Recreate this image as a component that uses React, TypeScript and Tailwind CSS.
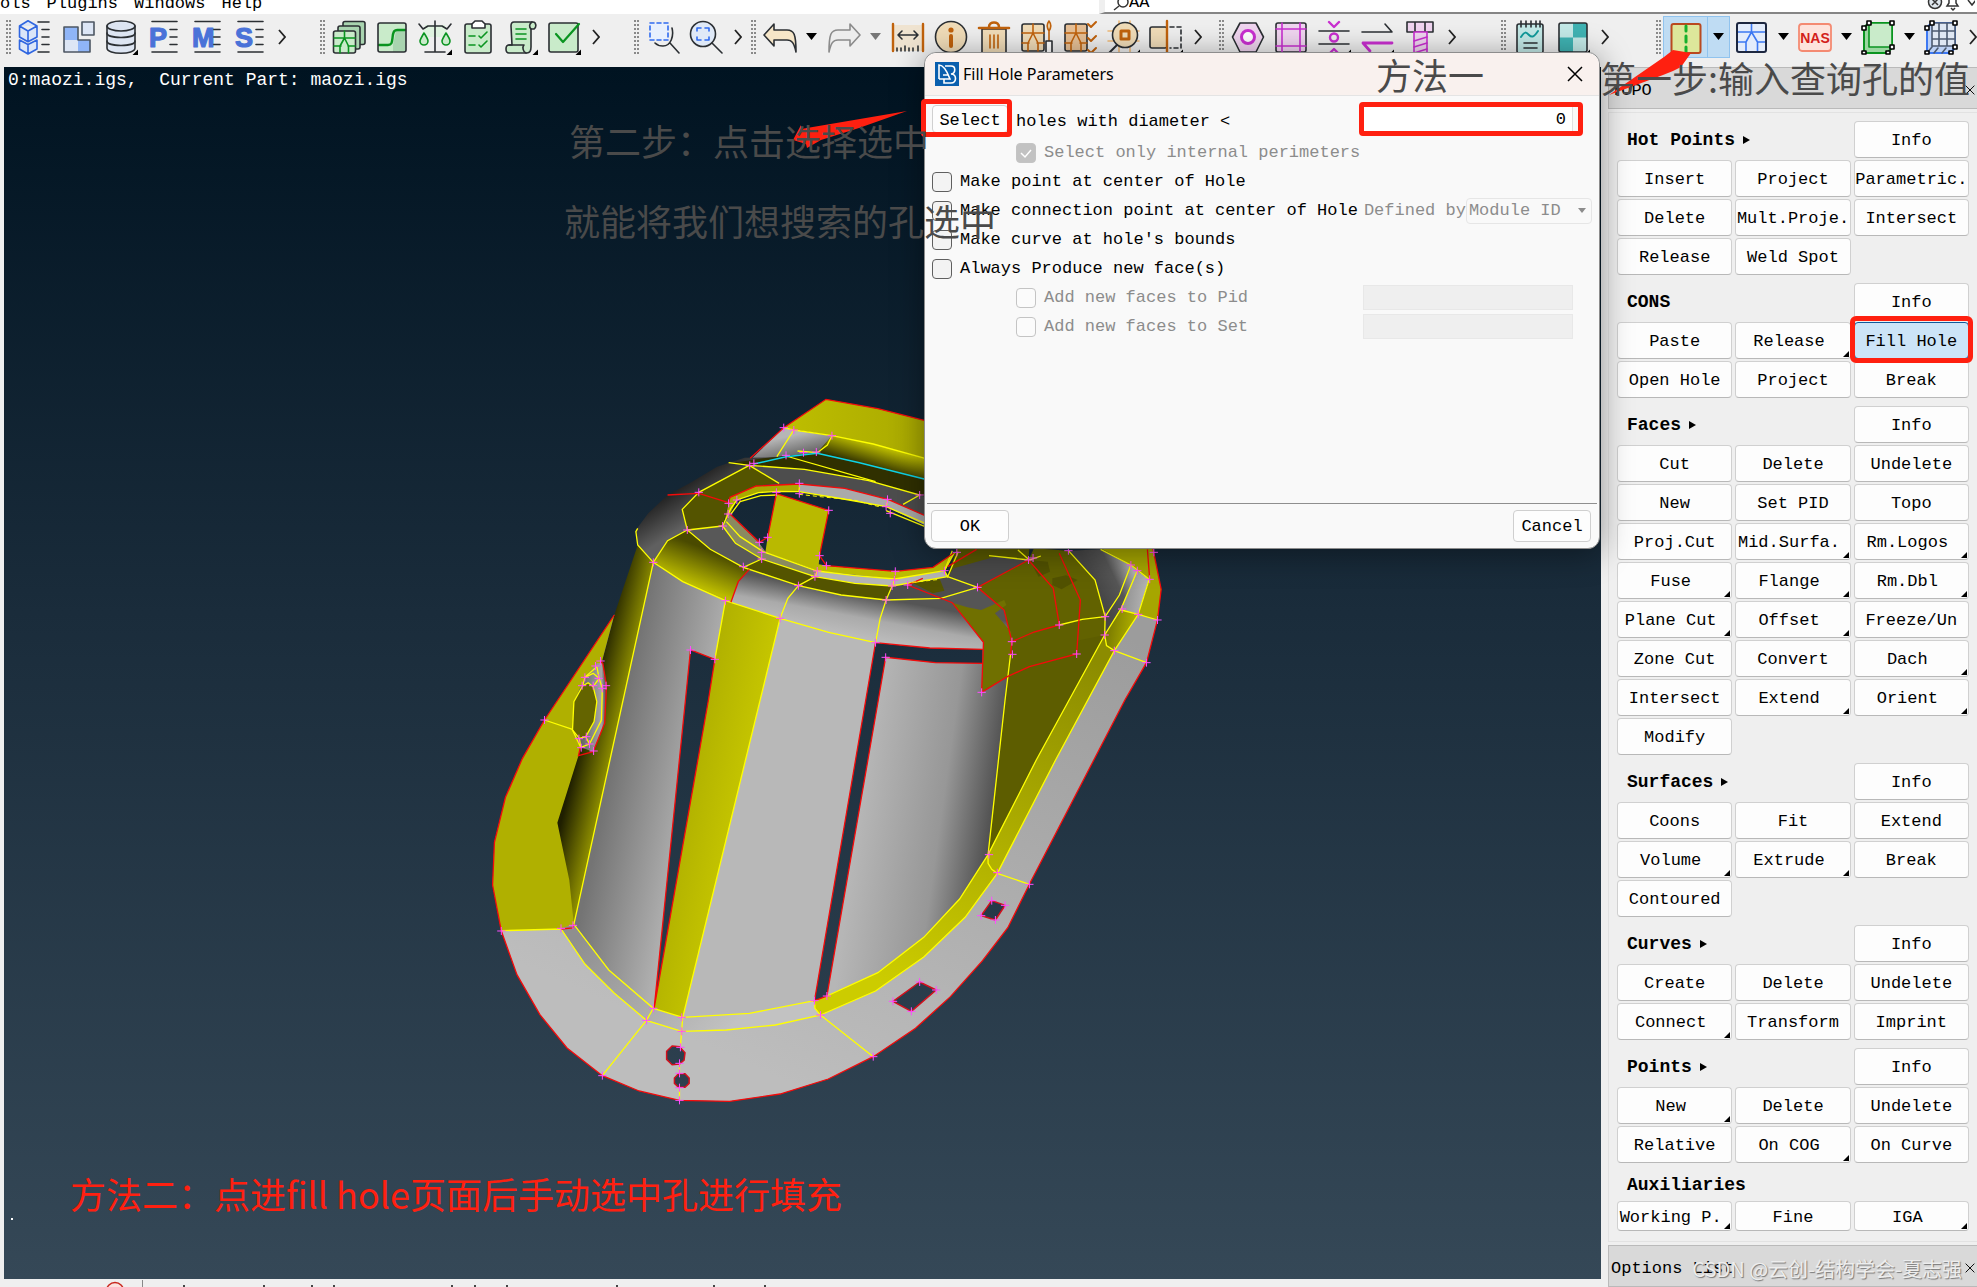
import { useState } from 'react'
import type { ReactNode } from 'react'

const INK = '#2b2f33'

function Icon({ children }: { children: ReactNode }) {
  return (
    <svg className="w-[34px] h-9 shrink-0" viewBox="0 0 34 36" fill="none" strokeWidth={1.6} strokeLinejoin="round" strokeLinecap="round">
      {children}
    </svg>
  )
}

const Corner = () => <path d="M34 30.500V36h-5.500z" fill="#000" />

function LetterList({ letter }: { letter: string }) {
  return (
    <Icon>
      <path d="M5 2.500h25M23 10.500h7M23 18h7M23 25.500h7M5 33h25" stroke={INK} />
      <text x="2" y="28" fill="#4a72d8" stroke="#4a72d8" strokeWidth={1.200} className="font-['Liberation_Sans',sans-serif] text-[27px] font-bold">{letter}</text>
    </Icon>
  )
}

const icons: Record<string, ReactNode> = {
  tree: (
    <Icon>
      <path d="M20 3h11M24 10.500h7M24 18h7M24 25.500h7M20 33h11" stroke={INK} />
      <path d="M1.500 7L10 1.800 19 7v11l-9 4.800L1.500 18zM1.500 7L10 12l9-5M10 12v10.500" fill="#dbe6f8" stroke="#2f66e0" />
      <path d="M1.500 21v9l8.500 5 9-5v-9l-9 4.500zM10 25.500V35" fill="#dbe6f8" stroke="#2f66e0" />
    </Icon>
  ),
  parts: (
    <Icon>
      <path d="M3 8h14v13H3z" fill="#8fb5f8" />
      <path d="M3 21h14v12H3z" fill="#dde6f5" />
      <path d="M17 21h12v12H17z" fill="#8fb5f8" />
      <path d="M3 8h14v13h12v12H3z" stroke="#4d5763" />
      <path d="M21 3h12v13H21z" fill="#dde6f5" stroke="#4d5763" />
    </Icon>
  ),
  database: (
    <Icon>
      <path d="M3 7v22c0 7 28 7 28 0V7" fill="#dde5f2" stroke={INK} />
      <ellipse cx="17" cy="7" rx="14" ry="5" fill="#dde5f2" stroke={INK} />
      <path d="M3 14c0 6 28 6 28 0M3 22c0 6 28 6 28 0" stroke={INK} />
      <Corner />
    </Icon>
  ),
  p: <LetterList letter="P" />,
  m: <LetterList letter="M" />,
  s: <LetterList letter="S" />,
  stack: (
    <Icon>
      <rect x="11" y="2.500" width="22" height="23" rx="2" fill="#a9d4b0" stroke={INK} />
      <rect x="6" y="7" width="22" height="23" rx="2" fill="#a9d4b0" stroke={INK} />
      <rect x="1.500" y="12" width="22" height="22" rx="2" fill="#c9ebca" stroke={INK} />
      <path d="M2 19h21M2 27h7M16 27h7M12.500 12v7L8 27v7M12.500 19l4 8v7" stroke="#0a9420" />
    </Icon>
  ),
  step: (
    <Icon>
      <rect x="3" y="4" width="28" height="29" rx="2" fill="#c9ebca" />
      <path d="M18 26l3-14h10v21H18z" fill="#a9d4b0" />
      <path d="M4 26h9c4 0 4-3 4.500-7s.5-8 5-8H30" stroke="#0a9420" strokeWidth={2.400} />
      <rect x="3" y="4" width="28" height="29" rx="2" stroke={INK} />
    </Icon>
  ),
  balance: (
    <Icon>
      <path d="M7 6h20l4 12H3z" fill="#dff3df" />
      <path d="M17 2v31M7 33h20M1 5l4 5 5-3h14l5 3 4-5" stroke={INK} />
      <path d="M6 14c-3 5-4 7-4 8a4 4 0 0 0 8 0c0-2-2-5-4-8zM28 14c-3 5-4 7-4 8a4 4 0 0 0 8 0c0-2-2-5-4-8z" fill="#c9ebca" stroke="#0a9420" />
      <Corner />
    </Icon>
  ),
  checklist: (
    <Icon>
      <rect x="4" y="5" width="26" height="29" rx="2" fill="#c9ebca" stroke={INK} />
      <path d="M11 9V5l3-3h7l3 3v4z" fill="#fff" stroke={INK} />
      <path d="M8 17h6M8 26h6M18 17l2 2 6-6M18 26l2 2 6-6" stroke="#0a9420" />
    </Icon>
  ),
  scroll: (
    <Icon>
      <path d="M7 7c0-3 1-4 3-4h19c3 0 4 5 1 7h-3v18c0 4-1 6-4 6H5c-4 0-4-8 0-8h3z" fill="#c9ebca" stroke={INK} />
      <path d="M5 26h15c-2 2-1 7 2 8M27 10c-2-2-2-5 1-7" stroke={INK} />
      <path d="M12 10h10M12 15h10M12 20h10" stroke="#0a9420" />
      <Corner />
    </Icon>
  ),
  check: (
    <Icon>
      <rect x="2" y="4" width="29" height="29" rx="2" fill="#c9ebca" stroke={INK} />
      <path d="M9 15l7 8L32 5" stroke="#0a9420" strokeWidth={2.200} />
      <Corner />
    </Icon>
  ),
  marquee: (
    <Icon>
      <path d="M26 9c2 8-1 18-9 18-3 0-6-1-8-3M24 24l9 10" stroke={INK} />
      <path d="M4 4h18v17H4z" fill="#e8f0fd" stroke="#2f6bf0" strokeDasharray="4 3" />
    </Icon>
  ),
  zoomFit: (
    <Icon>
      <circle cx="14" cy="15" r="12.500" fill="#dfe9f7" stroke={INK} />
      <path d="M23 24l10 10" stroke={INK} />
      <path d="M8 12V9h4M16 9h4v3M20 18v3h-4M12 21H8v-3" stroke="#2f6bf0" />
    </Icon>
  ),
  undo: (
    <Icon>
      <path d="M11 5v6h13c7 0 9 4 9 22-2-9-4-12-9-12H11v6L1 16z" fill="#f6e6c8" stroke={INK} />
    </Icon>
  ),
  redo: (
    <Icon>
      <path d="M23 5v6H11c-7 0-9 4-9 22 2-9 4-12 9-12h12v6l10-11z" fill="#ededed" stroke="#8b8b8b" />
    </Icon>
  ),
  measure: (
    <Icon>
      <path d="M2 6h30v26H2z" fill="#efe3d0" />
      <path d="M2 5v27M32 5v27" stroke="#c0620c" strokeWidth={2.400} />
      <path d="M7 16h20M11 12l-4 4 4 4M23 12l4 4-4 4M6 32v-3M10 32v-3M14 32v-5M18 32v-3M22 32v-3M27 32v-5" stroke={INK} />
    </Icon>
  ),
  info: (
    <Icon>
      <circle cx="17" cy="18" r="15.500" fill="#f0dcb8" stroke={INK} />
      <circle cx="17" cy="11" r="2.600" fill="#c0620c" />
      <path d="M17 17v10" stroke="#c0620c" strokeWidth={4} />
    </Icon>
  ),
  trash: (
    <Icon>
      <path d="M5 10h24v24H5z" fill="#f0dcb8" stroke={INK} />
      <path d="M2 9h30M12 8c0-6 10-6 10 0" stroke="#c0620c" strokeWidth={2.600} />
      <path d="M13 16v13M17 16v13M21 16v13" stroke="#c0620c" />
    </Icon>
  ),
  meshTool: (
    <Icon>
      <rect x="2" y="5" width="22" height="27" rx="2" fill="#f0dcb8" stroke={INK} />
      <path d="M2 14h22M2 24h7M17 24h7M13 5v9l-5 10v8M13 14l5 10v8" stroke="#c0620c" />
      <path d="M29 2c-3 4-2 7 0 10 2-3 3-6 0-10zM29 12v10" stroke="#c0620c" fill="#f0dcb8" />
      <rect x="26" y="22" width="6" height="12" fill="#fff" stroke={INK} />
    </Icon>
  ),
  meshCheck: (
    <Icon>
      <rect x="2" y="5" width="22" height="27" rx="2" fill="#e7c096" stroke={INK} />
      <path d="M2 14h22M2 24h7M17 24h7M13 5v9l-5 10v8M13 14l5 10v8" stroke="#c0620c" />
      <path d="M25 5l3 3 5-5M25 19l3 3 5-5M25 31l3 3 5-5" stroke="#c0620c" strokeWidth={2} />
    </Icon>
  ),
  inspect: (
    <Icon>
      <path d="M2 12h31M2 22h31M13 2v32M24 2v32" stroke="#f0bb78" />
      <circle cx="19" cy="16" r="12.500" fill="#f0dcb8" stroke={INK} />
      <path d="M11 26L2 35" stroke={INK} strokeWidth={2} />
      <path d="M15 12h8v8h-8z" stroke="#c0620c" strokeWidth={3} />
      <Corner />
    </Icon>
  ),
  mirror: (
    <Icon>
      <rect x="1" y="8" width="17" height="21" rx="2" fill="#f0dcb8" stroke={INK} />
      <path d="M21 8h11v21H21" stroke={INK} strokeDasharray="4 3" />
      <path d="M18 2v32" stroke="#c0620c" strokeWidth={2.400} />
      <Corner />
    </Icon>
  ),
  nut: (
    <Icon>
      <path d="M1.500 18L9 4h16l7.500 14L25 33H9z" fill="#f0d5f0" stroke={INK} />
      <circle cx="17" cy="18" r="6.500" fill="#fff" stroke="#c92fd0" strokeWidth={3} />
    </Icon>
  ),
  frame: (
    <Icon>
      <rect x="2" y="4" width="30" height="29" rx="2" fill="#f0d5f0" stroke={INK} />
      <path d="M2 10h30M2 27h30M8 4v29M26 4v29" stroke="#c92fd0" />
    </Icon>
  ),
  pinch: (
    <Icon>
      <path d="M2 12h30M2 25h30" stroke={INK} />
      <circle cx="17" cy="18.500" r="4" stroke="#c92fd0" strokeWidth={2.400} />
      <path d="M12 3l5 5 5-5M12 35l5-5 5 5" stroke="#c92fd0" strokeWidth={2.400} />
      <Corner />
    </Icon>
  ),
  swap: (
    <Icon>
      <path d="M2 13h30l-7-8" stroke={INK} />
      <path d="M32 24H3l7 8" stroke="#c92fd0" strokeWidth={2.800} />
      <Corner />
    </Icon>
  ),
  bolt: (
    <Icon>
      <path d="M4 3h26v10H4zM12 3v10M22 3v10" fill="#f0d5f0" stroke={INK} />
      <path d="M11 13h13v21H11z" fill="#f0d5f0" stroke="#c92fd0" />
      <path d="M11 22l13-4M11 28l13-4M11 34l13-4" stroke="#c92fd0" />
    </Icon>
  ),
  notepad: (
    <Icon>
      <rect x="4" y="5" width="26" height="29" rx="2" fill="#c3e9e7" stroke={INK} />
      <path d="M8 2v6M13 2v6M18 2v6M23 2v6M27 2v6M11 24h13M11 29h13" stroke={INK} />
      <path d="M8 18c4-6 5-5 8-2s5 2 9-4" stroke="#109a9a" strokeWidth={2} />
    </Icon>
  ),
  checker: (
    <Icon>
      <rect x="3" y="4" width="28" height="29" rx="2" fill="#c3e9e7" />
      <path d="M17 4h14v14.500H17zM17 18.500H3V33h14z" fill="#3fb3b3" />
      <rect x="3" y="4" width="28" height="29" rx="2" stroke={INK} />
      <Corner />
    </Icon>
  ),
  topo: (
    <Icon>
      <rect x="2.500" y="5" width="29" height="29" rx="2" fill="#dde79b" stroke="#b9491f" strokeWidth={2} />
      <path d="M17 7v5M17 17v6M17 28v5" stroke="#17b02c" strokeWidth={3} />
    </Icon>
  ),
  mesh: (
    <Icon>
      <rect x="2" y="4" width="29" height="29" rx="2" fill="#e3ecfb" />
      <path d="M2 13h29M2 23h8M23 23h8M16.500 4v9L11 23v10M16.500 13l6 10v10" stroke="#3d78f2" />
      <rect x="2" y="4" width="29" height="29" rx="2" stroke="#1d2740" strokeWidth={2} />
    </Icon>
  ),
  nas: (
    <Icon>
      <rect x="1" y="5" width="32" height="27" rx="3" fill="#fde3dc" stroke="#f48a72" strokeWidth={1.800} />
      <text x="17" y="24" textAnchor="middle" fill="#d3201a" className="font-['Liberation_Sans',sans-serif] text-[14px] font-bold">NAS</text>
    </Icon>
  ),
  solid: (
    <Icon>
      <path d="M3 8l5-4h23v25l-5 5H3z" fill="#9ad7a0" stroke="#0a9420" strokeWidth={2} />
      <path d="M8 4h23v24H8z" fill="#c9ebca" stroke="#0a9420" />
      <path d="M6 2h4v4H6zM29 2h4v4h-4zM1 7h4v4H1zM29 26h4v4h-4zM1 32h4v3H1zM25 32h4v3h-4z" fill="#fff" stroke="#000" />
    </Icon>
  ),
  solidMesh: (
    <Icon>
      <path d="M3 8l5-4h23v25l-5 5H3z" fill="#bcd1f5" stroke="#3d78f2" strokeWidth={2} />
      <path d="M8 4h23v23H8zM15 4v23M23 4v23M8 12h23M8 20h23M3 34l5-6M10 34l4-5M18 34l4-5" fill="#dfe7f3" stroke="#4c5a70" />
      <path d="M6 2h4v4H6zM29 2h4v4h-4zM1 7h4v4H1zM29 26h4v4h-4zM1 32h4v3H1zM25 32h4v3h-4z" fill="#fff" stroke="#000" />
    </Icon>
  ),
}

function Tool({ name }: { name: string }) {
  return (
    <button type="button" aria-label={name} className="w-[43px] h-10 flex items-center justify-center shrink-0">
      {icons[name]}
    </button>
  )
}

function More() {
  return (
    <button type="button" aria-label="more tools" className="w-[22px] h-10 flex items-center justify-center shrink-0">
      <svg className="w-2 h-4" viewBox="0 0 8 16" fill="none" stroke="#222" strokeWidth={1.800}>
        <path d="M1 1l6 7-6 7" />
      </svg>
    </button>
  )
}

function Drop({ muted }: { muted?: boolean }) {
  return (
    <button type="button" aria-label="options" className="w-[21px] h-10 flex items-center justify-center shrink-0">
      <svg className="w-[11px] h-[7px]" viewBox="0 0 11 7">
        <path d="M0 0h11L5.500 7z" fill={muted ? '#777' : '#000'} />
      </svg>
    </button>
  )
}

const Handle = () => <span className="w-[5px] h-[34px] mx-0.5 shrink-0 border-x-2 border-dotted border-[#8a8a8a]" />

const Group = ({ children, className = '' }: { children: ReactNode; className?: string }) => (
  <div className={`flex items-center shrink-0 ${className}`}>
    <Handle />
    {children}
  </div>
)

function MenuBar() {
  return (
    <header className="h-[14px] overflow-hidden flex items-end bg-white text-[17px] leading-5">
      <nav className="flex flex-1 items-end gap-4 whitespace-nowrap">
        <a href="#tools">ols</a>
        <a href="#plugins">Plugins</a>
        <a href="#windows">Windows</a>
        <a href="#help">Help</a>
      </nav>
      <div className="w-[878px] flex items-end border-l-[6px] border-l-[#efefef] border-b-2 border-b-[#858585]">
        <svg className="w-4 h-3 ml-2 shrink-0" viewBox="0 0 16 12" fill="none" stroke="#333" strokeWidth={1.500}>
          <circle cx="10" cy="2" r="5" />
          <path d="M6 6L1 10" />
        </svg>
        <input aria-label="search" defaultValue="AA" className="flex-1 h-[18px] outline-none" />
        <svg className="w-12 h-3 mr-0.5 shrink-0" viewBox="0 0 48 12" fill="none" stroke="#333" strokeWidth={1.500}>
          <circle cx="8" cy="2" r="6.500" fill="#dfe7ee" />
          <path d="M5-1l6 6M11-1L5 5M20 6h11l-2-3V-3h-7v6zM24 8l2 2 2-2M41 0l4 5 4-5" />
        </svg>
      </div>
    </header>
  )
}

function Toolbar() {
  return (
    <div className="h-[53px] pb-2 pl-1 flex items-center bg-[#efefef] overflow-hidden">
      <Group>
        {['tree', 'parts', 'database', 'p', 'm', 's'].map((n) => <Tool key={n} name={n} />)}
        <More />
      </Group>
      <Group className="ml-[25px]">
        {['stack', 'step', 'balance', 'checklist', 'scroll', 'check'].map((n) => <Tool key={n} name={n} />)}
        <More />
      </Group>
      <Group className="ml-[25px]">
        <Tool name="marquee" />
        <Tool name="zoomFit" />
        <More />
      </Group>
      <Group>
        <Tool name="undo" />
        <Drop />
        <Tool name="redo" />
        <Drop muted />
        {['measure', 'info', 'trash', 'meshTool', 'meshCheck', 'inspect', 'mirror'].map((n) => <Tool key={n} name={n} />)}
        <More />
      </Group>
      <Group className="ml-2">
        {['nut', 'frame', 'pinch', 'swap', 'bolt'].map((n) => <Tool key={n} name={n} />)}
        <More />
      </Group>
      <Group className="ml-9">
        <Tool name="notepad" />
        <Tool name="checker" />
        <More />
      </Group>
      <Group className="ml-[38px]">
        <div className="flex bg-[#bfdcf3] border border-[#90c3ee]">
          <Tool name="topo" />
          <div className="border-l border-[#90c3ee]"><Drop /></div>
        </div>
        {['mesh', 'nas', 'solid'].map((n) => (
          <div key={n} className="flex w-[63px]">
            <Tool name={n} />
            <Drop />
          </div>
        ))}
        <Tool name="solidMesh" />
        <More />
      </Group>
    </div>
  )
}

const yellowLines = [
  '184,1020 245,1048', '421,547 248,1633', '578,662 555,838', '697,715 485,1913',
  '387,445 383,455 387,495 421,547 485,605 578,662 697,715 803,757 905,788',
  '421,547 452,482 495,450', '630,256 520,337 484,388 495,450 545,508 617,562 737,617 830,645 928,660 1047,655 1127,622',
  '495,450 572,438', '617,562 657,537', '737,617 773,590', '928,660 941,618', '1062,590 1127,622',
  '737,617 714,655 697,715', '928,660 915,715 905,788',
  '572,438 600,490 657,537 773,590 860,610 941,618 1062,590',
  '580,425 610,470 660,515 778,573 860,587 947,597 1055,572 1075,520',
  '572,438 590,385 603,360 650,338 690,334 738,335 835,357 928,380 1013,430',
  '590,402 610,365 655,347 690,345', '928,392 1013,440', '740,312 738,335', '932,358 928,380', '773,590 778,573', '941,618 947,597',
  '585,248 630,256 750,268 890,302 1001,345 965,373', '710,228 905,305', '630,256 695,310', '735,213 778,218',
  '705,143 727,150 810,167 900,192 1013,235', '727,150 690,230', '810,167 800,195 778,218',
  '1199,823 1187,960 1150,1424', '1305,735 1355,718 1405,710', '1325,512 1383,600 1405,710 1404,765',
  '1395,508 1461,555 1501,598', '1461,555 1436,645 1405,710', '1475,572 1440,685 1404,765 1255,1140 1150,1424',
  '1440,690 1477,703 1519,720', '1501,598 1477,703 1425,812 1297,1140 1170,1480', '1404,765 1408,797 1425,812 1495,848',
  '1150,1424 1150,1450 1158,1468 1170,1480 1240,1513',
  '1150,1424 1088,1557 1010,1672 910,1778 799,1848', '1170,1480 1100,1612 1010,1731 905,1833 785,1905 773,1885 772,1862',
  '90,1652 220,1647 272,1752 335,1838 406,1921 483,1954 580,1950 687,1935 785,1905 900,2030',
  '248,1633 324,1770 421,1885 485,1912 630,1900 772,1862',
  '421,1885 406,1921 310,2087', '485,1912 480,2000', '478,2050 478,2078', '478,2123 478,2160',
  '298,860 303,895 310,925 308,1020 282,1092 263,1102 245,1050', '267,918 272,892 290,880 303,895 290,920', '272,892 298,860', '260,1075 263,1102', '274,1070 282,1092',
  '1152,527 1240,540 1265,528', '1215,510 1240,540', '1072,512 1055,572 1062,590 1085,515',
]

const redLines = [
  '336,705 184,1020 136,1135 99,1252 75,1387 71,1515 90,1653 124,1784 174,1904 233,2004 310,2087 390,2133 478,2161 587,2164 697,2142 802,2097 900,2030 992,1945 1068,1850 1138,1742 1193,1643 1240,1513 1448,960 1495,848 1519,720 1527,628 1509,505',
  '632,235 705,143 797,58 910,86 1013,122', '452,345 520,340 585,368 588,352 645,318 740,312 838,325 932,358 1013,407',
  '588,402 652,487 670,472 689,341 803,391 783,527 798,557 948,574 1030,562 1075,520', '630,568 606,605 590,667',
  '555,838 502,810 491,960 423,1883 541,960 555,838',
  '1138,808 1023,804 905,788 772,1862 799,1848 911,960 927,832 1035,848 1138,850',
  '1008,595 975,615 1072,668 1140,787 1136,937 1192,890 1240,860 1343,822 1351,660 1305,520',
  '1125,508 1062,560', '1238,540 1127,622 1185,690 1202,785 1250,756 1305,735 1292,625 1238,540', '1202,785 1199,823',
  '1497,508 1502,598', '306,842 311,850 319,918 315,1030 290,1115 258,1127 262,1102', '220,1647 246,1644 248,1633',
]

const crosses = [
  [705, 143], [727, 150], [810, 167], [710, 226], [748, 218], [776, 216], [640, 250], [631, 256], [520, 337], [585, 370], [495, 450],
  [572, 438], [584, 402], [603, 360], [689, 337], [739, 310], [739, 341], [803, 391], [931, 358], [928, 380], [937, 400], [1001, 345],
  [652, 487], [670, 472], [657, 517], [657, 537], [617, 560], [737, 617], [773, 590], [783, 527], [798, 557], [778, 573], [948, 574],
  [946, 600], [941, 618], [928, 660], [975, 615], [1055, 572], [1082, 517], [1127, 622], [1238, 540], [1248, 534], [1325, 512],
  [421, 547], [578, 662], [697, 715], [905, 788], [927, 832], [502, 810], [555, 838], [1136, 937], [1202, 785], [1203, 823], [1305, 735],
  [1343, 822], [1405, 710], [1404, 765], [1425, 812], [1495, 848], [1519, 720], [1477, 703], [1442, 687], [1461, 555], [1475, 572],
  [1502, 598], [1511, 517], [184, 1020], [306, 843], [295, 858], [272, 892], [266, 917], [290, 917], [302, 895], [318, 917], [310, 925],
  [259, 1076], [275, 1070], [264, 1103], [282, 1092], [291, 1113], [90, 1653], [220, 1645], [246, 1636], [421, 1885], [406, 1921],
  [483, 1912], [483, 1954], [772, 1862], [799, 1848], [785, 1905], [900, 2030], [310, 2087], [478, 2161], [480, 2002], [478, 2050],
  [478, 2080], [478, 2123], [1152, 1424], [1170, 1478], [1240, 1513], [1158, 1562], [1187, 1576], [1166, 1620], [1135, 1607],
  [1001, 1806], [1037, 1830], [983, 1894], [943, 1864],
]

const cutouts = [
  '1158,1562 1187,1576 1166,1620 1135,1607',
  '1001,1806 1037,1830 983,1894 943,1864',
  '462,1998 478,2000 490,2018 488,2040 478,2052 462,2054 450,2038 450,2014',
  '476,2081 490,2081 499,2094 499,2110 490,2122 476,2122 467,2110 467,2094',
]

const buckle = '267,918 248,965 245,1050 260,1075 274,1070 292,1025 298,965 290,920 279,908'

const faces: [string, string][] = [
  // brim
  ['url(#brim)', '336,705 184,1020 136,1135 99,1252 75,1387 71,1515 90,1653 124,1784 174,1904 233,2004 310,2087 390,2133 478,2161 587,2164 697,2142 802,2097 900,2030 992,1945 1068,1850 1138,1742 1193,1643 1240,1513 1448,960 1495,848 1519,720 1460,640 1200,823 421,547'],
  ['#b0b000', '336,705 184,1020 136,1135 99,1252 75,1387 71,1515 90,1653 220,1647 247,1640 300,1300 310,840'],
  ['url(#side)', '383,450 387,495 336,705 310,840 295,940 258,1127 212,1328 238,1500 248,1633 421,547'],
  ['url(#trough)', '248,1633 324,1770 421,1885 485,1912 630,1900 772,1862 785,1905 687,1935 580,1950 483,1954 406,1921 335,1838 272,1752 220,1645'],
  // crown walls
  ['url(#wallL)', '421,547 485,605 578,662 423,1885 324,1770 248,1633'],
  ['url(#strip)', '578,662 697,715 485,1913 421,1885'],
  ['#b8b8b8', '697,715 803,757 905,788 772,1862 630,1900 485,1913'],
  ['url(#wallR)', '905,788 1138,808 1202,785 1195,880 1187,960 1150,1424 1088,1557 1010,1672 910,1778 799,1848 772,1862'],
  ['#5d5d00', '1199,823 1202,700 1405,700 1404,765 1255,1140 1150,1424 1187,960'],
  ['url(#fillet)', '1404,765 1408,797 1425,812 1297,1140 1170,1480 1100,1612 1010,1731 905,1833 785,1905 773,1885 772,1862 799,1848 910,1778 1010,1672 1088,1557 1150,1424 1255,1140'],
  // slots
  ['url(#sky)', '502,810 555,838 541,960 423,1883 491,960'],
  ['url(#sky)', '905,788 1023,804 1138,808 1138,850 1035,848 927,832 911,960 799,1848 772,1862'],
  // back brim
  ['url(#backY)', '705,143 797,58 910,86 1013,122 1013,235 900,192 810,167'],
  ['url(#backG)', '705,143 727,150 810,167 778,218 710,228 632,240'],
  ['url(#backShade)', '810,167 900,192 1013,235 1013,300 870,248 778,218'],
  ['url(#dome)', '383,450 410,400 452,345 500,310 560,260 620,233 700,232 630,256 520,337 484,388 495,450 452,482 421,547 387,495'],
  ['#303000', '588,250 660,235 710,228 778,220 870,248 1013,298 1013,350 890,302 750,268 630,256'],
  // crown band
  ['url(#bandY)', '421,547 452,482 495,450 545,508 617,562 630,568 606,605 590,667 485,605'],
  ['url(#bandG)', '630,568 737,617 830,645 928,660 1047,655 1127,622 1185,690 1202,785 1138,808 1023,804 905,788 803,757 697,715 590,667 606,605'],
  // flat ring
  ['#545400', '630,256 695,310 645,318 588,352 572,438 495,450 484,388 520,337'],
  ['#4d4d4d', '630,256 750,268 890,302 1013,350 1013,407 932,358 838,325 740,312 645,318 695,310'],
  ['#585858', '495,450 572,438 600,490 657,537 617,562 545,508'],
  ['#545400', '617,562 657,537 773,590 860,610 941,618 928,660 830,645 737,617'],
  ['#4d4d4d', '941,618 1062,590 1127,622 1047,655 928,660'],
  ['#545400', '985,608 1045,598 1055,632 1030,640'],
  ['#5a5a00', '1062,590 1082,505 1240,505 1238,540 1127,622'],
  ['#4a4a4a', '1062,590 1075,565 1165,530 1238,540 1127,622'],
  // inner ring wall
  ['#a9a900', '588,352 645,318 740,312 738,335 690,334 650,338 603,360 588,402 575,430'],
  ['#aaaaaa', '740,312 838,325 932,358 1013,407 1013,436 928,380 835,357 738,335'],
  ['#8a8a60', '588,402 652,487 665,515 778,573 773,590 657,537 600,490 572,438'],
  ['#bcbc00', '783,527 798,557 948,574 1030,562 1080,515 1055,575 947,597 778,573'],
  ['#b4b4b4', '778,573 947,597 1055,572 1062,590 941,618 860,610 773,590'],
  ['url(#sky)', '603,365 655,345 690,340 740,342 835,358 930,392 1013,438 1080,500 1075,520 1030,562 948,574 798,557 700,530 660,505 650,487 588,402'],
  ['#b9b900', '689,341 803,391 783,527 780,573 665,517 670,472'],
  // folded flap on the right
  ['#626200', '1127,622 1238,540 1250,505 1325,512 1383,600 1405,710 1404,765 1199,823 1202,785 1185,690'],
  ['#707000', '1072,668 1105,682 1135,690 1185,660 1190,675 1165,700 1200,755 1202,785 1199,823 1192,890 1136,937 1140,787'],
  ['#5f5f00', '1202,785 1305,735 1345,725 1343,822 1240,860 1192,890'],
  ['#525200', '1290,595 1320,586 1345,600 1310,628 1290,615'],
  ['#525200', '1240,540 1280,545 1285,575 1260,590'],
  ['url(#rim)', '1325,512 1395,508 1461,555 1475,572 1440,685 1404,765 1405,710 1383,600'],
  ['#a6a600', '1395,505 1509,505 1527,628 1519,720 1477,703 1502,598 1461,555'],
  ['url(#rimG)', '1475,572 1501,598 1477,703 1440,687'],
  ['url(#rimY)', '1404,765 1440,687 1477,703 1425,812 1408,797'],
  // side buckle
  ['url(#buckleG)', '298,850 311,850 319,918 315,1030 290,1115 263,1102 245,1050 248,965 272,892'],
  ['#646400', buckle],
  ...cutouts.map((points): [string, string] => ['url(#sky)', points]),
]

function Model() {
  return (
    <svg className="absolute inset-0 w-full h-full" viewBox="4 67 1597 1212" preserveAspectRatio="xMidYMid slice" fill="none">
      <defs>
        <linearGradient id="sky" gradientUnits="userSpaceOnUse" x1="0" y1="-939" x2="0" y2="2697">
          <stop stopColor="#001321" />
          <stop offset="0.450" stopColor="#1a2c3b" />
          <stop offset="1" stopColor="#354857" />
        </linearGradient>
        <linearGradient id="brim" gradientUnits="userSpaceOnUse" x1="1500" y1="800" x2="700" y2="2100">
          <stop stopColor="#9c9c9c" />
          <stop offset="1" stopColor="#bdbdbd" />
        </linearGradient>
        <linearGradient id="side" gradientUnits="userSpaceOnUse" x1="258" y1="1100" x2="330" y2="1112">
          <stop stopColor="#1f1f00" />
          <stop offset="1" stopColor="#8a8a00" />
        </linearGradient>
        <linearGradient id="trough" gradientUnits="userSpaceOnUse" x1="240" y1="1700" x2="600" y2="1930">
          <stop stopColor="#8f8f8f" />
          <stop offset="1" stopColor="#c2c2c2" />
        </linearGradient>
        <linearGradient id="wallL" gradientUnits="userSpaceOnUse" x1="340" y1="1100" x2="525" y2="1128">
          <stop stopColor="#747474" />
          <stop offset="1" stopColor="#b0b0b0" />
        </linearGradient>
        <linearGradient id="strip" gradientUnits="userSpaceOnUse" x1="520" y1="1100" x2="640" y2="1118">
          <stop stopColor="#b2b200" />
          <stop offset="1" stopColor="#c6c600" />
        </linearGradient>
        <linearGradient id="wallR" gradientUnits="userSpaceOnUse" x1="890" y1="1100" x2="1185" y2="1130">
          <stop stopColor="#b6b6b6" />
          <stop offset="0.600" stopColor="#979797" />
          <stop offset="1" stopColor="#4c4c4c" />
        </linearGradient>
        <linearGradient id="fillet" gradientUnits="userSpaceOnUse" x1="1400" y1="850" x2="900" y2="1800">
          <stop stopColor="#8c8c00" />
          <stop offset="1" stopColor="#cccc00" />
        </linearGradient>
        <linearGradient id="backY" x1="0" y1="0" x2="1" y2="0">
          <stop stopColor="#bebe00" />
          <stop offset="1" stopColor="#a9a900" />
        </linearGradient>
        <linearGradient id="backG" x1="0" y1="0" x2="0.600" y2="1">
          <stop offset="0.400" stopColor="#b6b6b6" />
          <stop offset="1" stopColor="#555" />
        </linearGradient>
        <linearGradient id="backShade" gradientUnits="userSpaceOnUse" x1="900" y1="190" x2="875" y2="252">
          <stop stopColor="#c4c400" />
          <stop offset="1" stopColor="#343400" />
        </linearGradient>
        <linearGradient id="dome" gradientUnits="userSpaceOnUse" x1="430" y1="350" x2="500" y2="430">
          <stop stopColor="#1c1c1c" />
          <stop offset="1" stopColor="#606060" />
        </linearGradient>
        <linearGradient id="bandY" gradientUnits="userSpaceOnUse" x1="560" y1="520" x2="510" y2="615">
          <stop stopColor="#4a4a00" />
          <stop offset="1" stopColor="#bcbc00" />
        </linearGradient>
        <linearGradient id="bandG" gradientUnits="userSpaceOnUse" x1="900" y1="650" x2="870" y2="770">
          <stop stopColor="#555" />
          <stop offset="0.550" stopColor="#aaa" />
          <stop offset="1" stopColor="#bbb" />
        </linearGradient>
        <linearGradient id="rim" gradientUnits="userSpaceOnUse" x1="1380" y1="600" x2="1465" y2="570">
          <stop stopColor="#474747" />
          <stop offset="0.500" stopColor="#565656" />
          <stop offset="1" stopColor="#b0b0b0" />
        </linearGradient>
        <linearGradient id="rimG" x1="0" y1="0" x2="1" y2="0.200">
          <stop stopColor="#8a8a8a" />
          <stop offset="1" stopColor="#b4b4b4" />
        </linearGradient>
        <linearGradient id="rimY" x1="0" y1="0" x2="1" y2="0.200">
          <stop stopColor="#6e6e00" />
          <stop offset="1" stopColor="#b4b400" />
        </linearGradient>
        <linearGradient id="buckleG" x1="0" y1="0" x2="1" y2="0">
          <stop stopColor="#4a4a4a" />
          <stop offset="0.850" stopColor="#a5a5a5" />
          <stop offset="1" stopColor="#444" />
        </linearGradient>
      </defs>
      <g transform="translate(460 380) scale(0.459184 0.333333)">
        <rect x="-4000" y="-939" width="12000" height="3640" fill="url(#sky)" />
        {faces.map(([fill, points], i) => <polygon key={i} fill={fill} points={points} />)}
        {yellowLines.map((p) => <polyline key={p} points={p} stroke="#ffff00" strokeWidth={1.300} vectorEffect="non-scaling-stroke" />)}
        <polygon points={buckle} stroke="#ffff00" strokeWidth={1.300} vectorEffect="non-scaling-stroke" />
        {redLines.map((p) => <polyline key={p} points={p} stroke="#f50a0a" strokeWidth={1.300} vectorEffect="non-scaling-stroke" />)}
        {cutouts.map((p) => <polygon key={p} points={p} stroke="#d30f1c" strokeWidth={1.500} vectorEffect="non-scaling-stroke" />)}
        <path d="M738 343l60 9 60 8 60 22M985 607l60-9" stroke="#ffff00" strokeDasharray="4 3" vectorEffect="non-scaling-stroke" />
        <polyline points="640,252 710,230 778,220 870,248 1013,298" stroke="#0fd3e6" strokeWidth={1.500} vectorEffect="non-scaling-stroke" />
        <path d={crosses.map(([x, y]) => `M${x - 9} ${y}h18M${x} ${y - 12}v24`).join('')} stroke="#ff4dff" vectorEffect="non-scaling-stroke" />
      </g>
      <path d="M793 140l8-15 0 4 106-18-48 17-38 12-14 8-1-4z" fill="#ff2010" />
      <path d="M11 1219h2" stroke="#fff" strokeWidth={2} />
    </svg>
  )
}

const sections: { title: string; arrow?: boolean; info?: boolean; items: string[] }[] = [
  { title: 'Hot Points', arrow: true, info: true, items: ['Insert', 'Project', 'Parametric.', 'Delete', 'Mult.Proje.', 'Intersect', 'Release', 'Weld Spot'] },
  { title: 'CONS', info: true, items: ['Paste', 'Release*', 'Fill Hole', 'Open Hole', 'Project', 'Break'] },
  {
    title: 'Faces', arrow: true, info: true,
    items: [
      'Cut', 'Delete', 'Undelete', 'New', 'Set PID', 'Topo', 'Proj.Cut', 'Mid.Surfa.*', 'Rm.Logos*', 'Fuse*', 'Flange*', 'Rm.Dbl*',
      'Plane Cut*', 'Offset*', 'Freeze/Un', 'Zone Cut', 'Convert', 'Dach*', 'Intersect', 'Extend*', 'Orient*', 'Modify',
    ],
  },
  { title: 'Surfaces', arrow: true, info: true, items: ['Coons', 'Fit', 'Extend', 'Volume*', 'Extrude*', 'Break', 'Contoured'] },
  { title: 'Curves', arrow: true, info: true, items: ['Create', 'Delete', 'Undelete', 'Connect*', 'Transform', 'Imprint'] },
  { title: 'Points', arrow: true, info: true, items: ['New*', 'Delete', 'Undelete', 'Relative', 'On COG*', 'On Curve'] },
  { title: 'Auxiliaries', items: ['Working P.*', 'Fine', 'IGA*'] },
]

function PanelButton({ label, short }: { label: string; short?: boolean }) {
  const hasMenu = label.endsWith('*')
  const text = label.replace('*', '')
  const active = text === 'Fill Hole'
  return (
    <div className="relative">
      <button
        type="button"
        className={`w-full pt-0.5 flex items-center justify-center whitespace-nowrap rounded border ${short ? 'h-[30px]' : 'h-[37px]'} ${hasMenu ? 'pr-2' : ''} ${active ? 'bg-[#cce4f7] border-[#10589a]' : 'bg-[#fdfdfd] border-[#d0d0d0] border-b-[#b8b8b8]'}`}
      >
        {text}
      </button>
      {hasMenu && (
        <svg className="absolute right-0.5 bottom-0.5 w-1.5 h-1.5" viewBox="0 0 6 6"><path d="M6 0v6H0z" /></svg>
      )}
      {active && <span className="pointer-events-none absolute -inset-1 -top-1.5 z-10 rounded-md border-[5px] border-[#ff2010]" />}
    </div>
  )
}

function CloseIcon({ className }: { className: string }) {
  return (
    <svg className={className} viewBox="0 0 16 16" fill="none" stroke="currentColor" strokeWidth={1.500}>
      <path d="M1 1l14 14M15 1L1 15" />
    </svg>
  )
}

function DockTitle({ title }: { title: string }) {
  return (
    <div className="h-[42px] pl-0.5 pr-0.5 pt-1 flex items-center justify-between bg-[#d9d9d9] border border-r-0 border-[#bababa]">
      <span>{title}</span>
      <button type="button" aria-label={`close ${title}`}><CloseIcon className="w-2.5 h-2.5" /></button>
    </div>
  )
}

function Sidebar() {
  return (
    <aside className="w-[369px] shrink-0 flex flex-col gap-[3px]">
      <DockTitle title="TOPO" />
      <div className="flex-1 flex flex-col gap-2 pt-2 pl-2 pr-2 border border-[#e2e2e2] border-r-0">
        {sections.map((s) => (
          <section key={s.title} className="grid grid-cols-3 gap-x-[3px] gap-y-0.5">
            <h2 className={`col-span-2 pl-2.5 flex items-center gap-2 font-bold text-lg leading-none ${s.info ? '' : 'h-7'}`}>
              {s.title}
              {s.arrow && <svg className="w-[7px] h-2" viewBox="0 0 7 8"><path d="M0 0l7 4-7 4z" /></svg>}
            </h2>
            {s.info ? <PanelButton label="Info" /> : <span />}
            {s.items.map((label) => <PanelButton key={label} label={label} short={!s.info} />)}
          </section>
        ))}
      </div>
      <DockTitle title="Options List" />
    </aside>
  )
}

function CheckRow({ label, disabled, checked, children }: { label: string; disabled?: boolean; checked?: boolean; children?: ReactNode }) {
  const [on, setOn] = useState(!!checked)
  return (
    <div className={`h-[29px] flex items-center ${disabled ? 'pl-[84px] text-[#8c8c8c]' : ''}`}>
      <label className="flex items-center gap-2 whitespace-nowrap">
        <span className="relative w-5 h-5">
          <input
            type="checkbox"
            checked={on}
            disabled={disabled}
            onChange={(e) => setOn(e.target.checked)}
            className="block appearance-none w-5 h-5 rounded border border-[#5f5f5f] bg-[#f3f3f3] disabled:border-[#c4c4c4] disabled:bg-[#fbfbfb] disabled:checked:bg-[#c2c2c2]"
          />
          {on && (
            <svg className="pointer-events-none absolute inset-0 w-5 h-5" viewBox="0 0 20 20" fill="none" stroke="#fff" strokeWidth={1.500}>
              <path d="M5 10l4 4 6-7" />
            </svg>
          )}
        </span>
        {label}
      </label>
      {children}
    </div>
  )
}

const RedFrame = ({ className }: { className: string }) => (
  <span className={`pointer-events-none absolute rounded border-[5px] border-[#ff2010] ${className}`} />
)

function FillHoleDialog() {
  const [diameter, setDiameter] = useState('0')
  return (
    <div
      role="dialog"
      aria-label="Fill Hole Parameters"
      className="absolute left-[924px] top-[52px] w-[676px] min-h-[497px] flex flex-col rounded-xl border border-[#8d8d8d] bg-[#f9f9f9] shadow-[0_4px_32px_rgba(0,0,0,0.4)]"
    >
      <div className="h-[43px] pl-2.5 pr-4 flex items-center gap-1 rounded-t-xl bg-[#f9f1ee] border-b border-[#e4e4e4]">
        <svg className="w-6 h-6 shrink-0" viewBox="0 0 24 24" fill="none" stroke="#fff" strokeWidth={1.600}>
          <path d="M0 0h24v24H0z" fill="#0a5fae" stroke="none" />
          <path d="M10 4h6c5 0 5 7 0 8 6 0 6 9 0 9H9v-4M4 17V3c4 0 8 6 11 14H4M8 13h5" />
        </svg>
        <h1 className="flex-1 font-['Noto_Sans',sans-serif] text-base leading-none">Fill Hole Parameters</h1>
        <button type="button" aria-label="close"><CloseIcon className="w-4 h-4" /></button>
      </div>
      <div className="flex-1 flex flex-col pt-1 px-[7px]">
        <div className="h-[38px] flex items-center">
          <span className="relative">
            <button type="button" className="w-[76px] h-7 pt-0.5 rounded border border-[#d0d0d0] bg-[#fdfdfd]">Select</button>
            <RedFrame className="-top-1.5 -bottom-1 -left-[11px] -right-1" />
          </span>
          <label htmlFor="diameter" className="ml-2 pt-1">holes with diameter &lt;</label>
          <span className="relative ml-auto mr-[19px]">
            <input
              id="diameter"
              value={diameter}
              onChange={(e) => setDiameter(e.target.value)}
              className="block w-[210px] h-[26px] pr-1.5 text-right bg-white border border-[#e0e0e0] border-b-[#1a5a9a] outline-none"
            />
            <RedFrame className="-top-1 -bottom-1 -left-1 -right-2.5" />
          </span>
        </div>
        <CheckRow label="Select only internal perimeters" disabled checked />
        <CheckRow label="Make point at center of Hole" />
        <CheckRow label="Make connection point at center of Hole">
          <label htmlFor="defined" className="ml-1.5 text-[#8c8c8c] whitespace-nowrap">Defined by</label>
          <span className="relative flex-1">
            <select id="defined" disabled className="block w-full h-[26px] pl-0.5 appearance-none rounded border border-[#e6e6e6] text-[#8c8c8c]">
              <option>Module ID</option>
            </select>
            <svg className="pointer-events-none absolute right-1.5 top-2.5 w-2 h-[5px]" viewBox="0 0 8 5"><path d="M0 0h8L4 5z" fill="#8c8c8c" /></svg>
          </span>
        </CheckRow>
        <CheckRow label="Make curve at hole's bounds" />
        <CheckRow label="Always Produce new face(s)" />
        <CheckRow label="Add new faces to Pid" disabled>
          <input disabled aria-label="Pid" className="ml-auto mr-[19px] w-[210px] h-[25px] bg-[#efefef] border border-[#e8e8e8]" />
        </CheckRow>
        <CheckRow label="Add new faces to Set" disabled>
          <input disabled aria-label="Set" className="ml-auto mr-[19px] w-[210px] h-[25px] bg-[#efefef] border border-[#e8e8e8]" />
        </CheckRow>
      </div>
      <div className="mx-0.5 py-1.5 pl-1 pr-1.5 flex justify-between border-t border-[#8f8f8f]">
        <button type="button" className="w-[78px] h-8 rounded border border-[#cfcfcf] bg-[#fdfdfd]">OK</button>
        <button type="button" className="w-[78px] h-8 rounded border border-[#cfcfcf] bg-[#fdfdfd]">Cancel</button>
      </div>
    </div>
  )
}

const noteClass = "pointer-events-none absolute whitespace-nowrap text-4xl font-['Noto_Sans_CJK_SC',sans-serif]"

function Annotations() {
  return (
    <>
      <svg className="pointer-events-none absolute left-[1605px] top-[48px] w-[90px] h-[50px]" viewBox="1605 48 90 50">
        <path d="M1609 95L1664 57l9-7 18 3-10 14-8 4-10 4z" fill="#ff2010" />
      </svg>
      <p className={`${noteClass} left-[1376px] top-[54px] text-[#4a4a4a]`}>方法一</p>
      <p className={`${noteClass} left-[1600px] top-[57px] text-[#4a4a4a]`}>第一步:输入查询孔的值</p>
      <p className={`${noteClass} left-[569px] top-[120px] text-[#4a4a4a]`}>第二步：点击选择选中</p>
      <p className={`${noteClass} left-[564px] top-[200px] text-[#4a4a4a]`}>就能将我们想搜索的孔选中</p>
      <p className={`${noteClass} left-[70px] top-[1173px] text-[#ff2010]`}>方法二：点进fill hole页面后手动选中孔进行填充</p>
      <p className="pointer-events-none absolute right-[15px] bottom-1 whitespace-nowrap text-xl text-[#ededed] [text-shadow:1px_1px_1px_#777] font-['Noto_Sans_CJK_SC',sans-serif]">
        CSDN @云创-结构学会-夏志强
      </p>
    </>
  )
}

export default function App() {
  return (
    <div className="relative min-h-screen flex flex-col overflow-hidden bg-[#efefef] text-black text-[17px] leading-none font-['Liberation_Mono','Noto_Sans_CJK_SC',monospace]">
      <MenuBar />
      <Toolbar />
      <main className="flex-1 flex">
        <div className="flex-1 flex flex-col pl-1 pr-[7px]">
          <div className="relative flex-1 overflow-hidden">
            <Model />
            <p className="relative pl-1 pt-1 text-lg leading-none text-white whitespace-pre">0:maozi.igs,  Current Part: maozi.igs</p>
          </div>
          <svg className="h-2 w-full" viewBox="4 0 1597 8" preserveAspectRatio="xMinYMin slice" fill="none">
            <circle cx="115" cy="12" r="8.500" fill="#fbe3e0" stroke="#c8281e" strokeWidth={1.500} />
            <path d="M142.500 1v7" stroke="#888" />
            <path d="M183 7h2M263 7h2M311 7h2M333 7h2M451 7h2M474 7h2M506 7h2M616 7h2M713 7h2M764 7h2" stroke="#444" strokeWidth={2} />
          </svg>
        </div>
        <Sidebar />
      </main>
      <FillHoleDialog />
      <Annotations />
    </div>
  )
}
